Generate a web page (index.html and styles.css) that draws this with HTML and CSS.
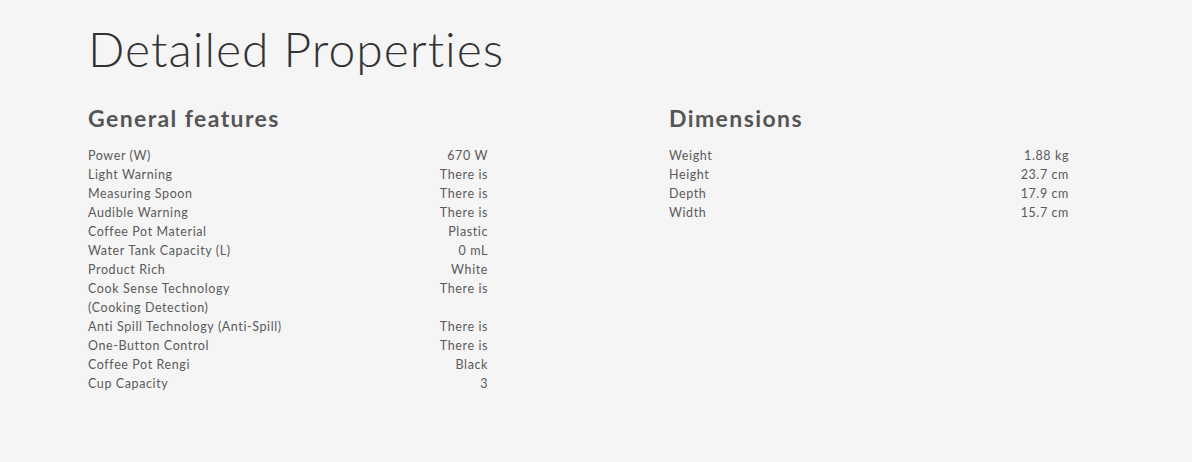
FILE: index.html
```html
<!DOCTYPE html>
<html lang="en">
<head>
<meta charset="utf-8">
<title>Detailed Properties</title>
<link rel="stylesheet" href="styles.css">
</head>
<body>
<main class="page">
  <h1 class="title">Detailed Properties</h1>
  <div class="columns">
    <section class="group">
      <h2 class="group-title">General features</h2>
      <dl class="props">
        <div class="row"><dt>Power (W)</dt><dd>670 W</dd></div>
        <div class="row"><dt>Light Warning</dt><dd>There is</dd></div>
        <div class="row"><dt>Measuring Spoon</dt><dd>There is</dd></div>
        <div class="row"><dt>Audible Warning</dt><dd>There is</dd></div>
        <div class="row"><dt>Coffee Pot Material</dt><dd>Plastic</dd></div>
        <div class="row"><dt>Water Tank Capacity (L)</dt><dd>0 mL</dd></div>
        <div class="row"><dt>Product Rich</dt><dd>White</dd></div>
        <div class="row"><dt>Cook Sense Technology (Cooking Detection)</dt><dd>There is</dd></div>
        <div class="row"><dt>Anti Spill Technology (Anti-Spill)</dt><dd>There is</dd></div>
        <div class="row"><dt>One-Button Control</dt><dd>There is</dd></div>
        <div class="row"><dt>Coffee Pot Rengi</dt><dd>Black</dd></div>
        <div class="row"><dt>Cup Capacity</dt><dd>3</dd></div>
      </dl>
    </section>
    <section class="group">
      <h2 class="group-title">Dimensions</h2>
      <dl class="props">
        <div class="row"><dt>Weight</dt><dd>1.88 kg</dd></div>
        <div class="row"><dt>Height</dt><dd>23.7 cm</dd></div>
        <div class="row"><dt>Depth</dt><dd>17.9 cm</dd></div>
        <div class="row"><dt>Width</dt><dd>15.7 cm</dd></div>
      </dl>
    </section>
  </div>
</main>
</body>
</html>
```
FILE: styles.css
```css
html, body {
  margin: 0;
  padding: 0;
  background: #f5f5f5;
}
body {
  font-family: Lato, "Open Sans", sans-serif;
  color: #5a5a5a;
}
.page {
  padding: 21px 0 0 88px;
}
.title {
  margin: 0;
  font-family: Lato, sans-serif;
  font-weight: 300;
  font-size: 48px;
  line-height: 56px;
  color: #333;
  letter-spacing: 1px;
}
.columns {
  display: flex;
  gap: 181px;
  margin-top: 27px;
}
.group {
  width: 400px;
}
.group-title {
  margin: 0 0 14px;
  font-size: 23px;
  line-height: 28px;
  font-weight: 700;
  color: #555;
  letter-spacing: 1.4px;
}
.props {
  margin: 0;
}
.row {
  display: flex;
  justify-content: space-between;
  font-size: 12.5px;
  line-height: 19px;
  letter-spacing: 0.6px;
}
.row dt {
  width: 195px;
}
.row dd {
  margin: 0;
  text-align: right;
}
```
